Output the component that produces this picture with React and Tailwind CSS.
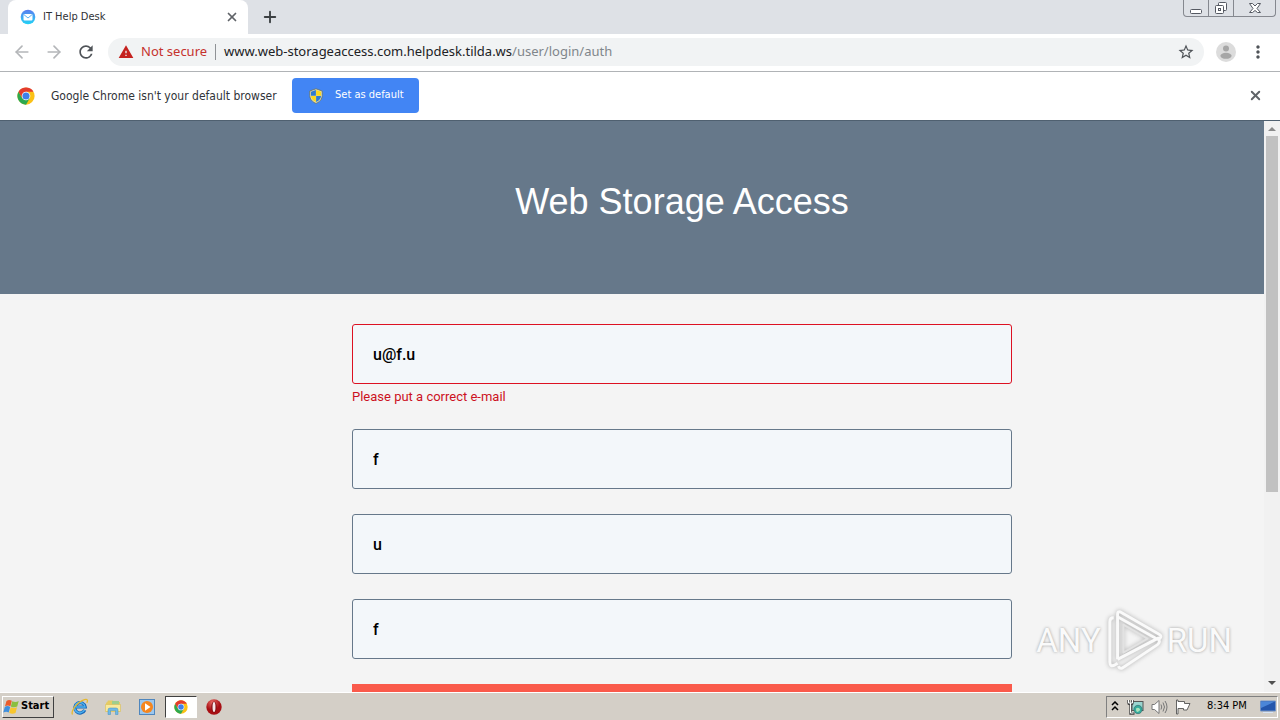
import React from 'react';
import { ArrowLeft, ArrowRight, Plus, X } from 'lucide-react';
import { MdRefresh, MdStarBorder, MdMoreVert, MdWarning } from 'react-icons/md';

const fields = [
    { id: 'email', label: 'E-mail', value: 'u@f.u', error: 'Please put a correct e-mail' },
    { id: 'username', label: 'Username', value: 'f' },
    { id: 'password', label: 'Password', value: 'u' },
    { id: 'confirm', label: 'Confirm password', value: 'f' },
];

const MailIcon = () => (
    <svg width="16" height="16" viewBox="0 0 16 16" aria-hidden="true">
        <defs>
            <linearGradient id="mail" x1="0" y1="0" x2="0" y2="1">
                <stop offset="0" stopColor="#5b7df0" />
                <stop offset="1" stopColor="#22d3f5" />
            </linearGradient>
        </defs>
        <circle cx="8" cy="8" r="7.3" fill="url(#mail)" />
        <rect x="3.5" y="5" width="9" height="6.4" rx="1" fill="#fff" />
        <path d="M3.8 5.5 8 9l4.2-3.5" fill="none" stroke="#4aa8f0" strokeWidth="0.9" />
    </svg>
);

const ChromeIcon = ({ size }) => (
    <svg width={size} height={size} viewBox="0 0 48 48" aria-hidden="true">
        <circle cx="24" cy="24" r="23" fill="#fbc116" />
        <path d="M4.1 12.5A23 23 0 0 0 24 47l10-17.3L24 24 14 29.7z" fill="#2da94f" />
        <path d="M4.1 12.5A23 23 0 0 1 43.9 12.5H24V24L14 29.7z" fill="#e33b2e" />
        <circle cx="24" cy="24" r="11.5" fill="#fff" />
        <circle cx="24" cy="24" r="9.5" fill="#3f7fea" />
    </svg>
);

const ShieldIcon = () => (
    <svg width="16" height="16" viewBox="0 0 16 16" aria-hidden="true">
        <path d="M8 .8 14.2 3v4.5c0 3.7-2.5 6.3-6.2 7.9-3.7-1.6-6.2-4.2-6.2-7.9V3z" fill="#e4dfbd" stroke="#63705f" strokeWidth="0.8" />
        <path d="M7.9 2 3 3.7v4.1h4.9z" fill="#2f7bd0" />
        <path d="M8.1 2 13 3.7v4.1H8.1z" fill="#fbd81d" />
        <path d="M3 8h4.9v6C5 12.7 3.1 10.7 3 8z" fill="#fbd81d" />
        <path d="M13 8H8.1v6c2.9-1.3 4.8-3.3 4.9-6z" fill="#2f7bd0" />
    </svg>
);

const AvatarIcon = () => (
    <svg width="20" height="20" viewBox="0 0 20 20" aria-hidden="true">
        <circle cx="10" cy="10" r="10" fill="#dcdcdc" />
        <circle cx="10" cy="6.5" r="3" fill="#a6a6a6" />
        <ellipse cx="10" cy="13.8" rx="5.6" ry="3" fill="#a6a6a6" />
    </svg>
);

const WindowsFlag = () => (
    <svg width="16" height="16" viewBox="0 0 16 16" aria-hidden="true">
        <path d="M3.5 2C5.5.5 7 .8 8.8 1.8L7.4 7.2C5.6 6.2 4 6.1 2 7.3z" fill="#ea5b2b" />
        <path d="M9.3 2.2c2 1 4.2 1 6.4-.1L14.2 7.5c-2.200 1.100-4.300 1-6.400-.1z" fill="#8bbf3f" />
        <path d="M1.800 7.900c2-1.200 3.700-1 5.400 0l-1.500 5.600c-1.800-1-3.400-1-5.400.1z" fill="#3f8fdd" />
        <path d="M7.700 8.200c2 1 4.100 1.100 6.300.1l-1.500 5.600c-2.100 1-4.200 1-6.300-.1z" fill="#f8c62d" />
    </svg>
);

const ExplorerIcon = () => (
    <svg width="18" height="18" viewBox="0 0 18 18" aria-hidden="true">
        <path d="M13.800 12A5.200 5.200 0 1 1 14.200 9H5" fill="none" stroke="#1767b8" strokeWidth="3.200" />
        <path d="M13.500 12A5.200 5.200 0 1 1 14 9H5" fill="none" stroke="#4db2f0" strokeWidth="1.500" />
        <path d="M1.500 16.500C-.5 13 7 3.500 13.500 1.600c3.400-1 3.400 1.300 2.300 3.300" fill="none" stroke="#e6b92e" strokeWidth="1.300" />
    </svg>
);

const FolderIcon = () => (
    <svg width="18" height="18" viewBox="0 0 18 18" aria-hidden="true">
        <path d="M2 4.500h1l1-2h5l1 1.500h6v10H2z" fill="#e5cb62" />
        <path d="M8 3h7v4H8z" fill="#9fce8c" />
        <path d="M1.500 6.500h15v7h-15z" fill="#f8e99c" stroke="#d7bc59" strokeWidth="0.600" />
        <path d="M4 16.500v-4.500q0-2 2-2h6q2 0 2 2v4.500h-2.500v-4h-5v4z" fill="#6fb9e6" stroke="#438fc0" strokeWidth="0.500" />
    </svg>
);

const PlayerIcon = () => (
    <svg width="16" height="16" viewBox="0 0 16 16" aria-hidden="true">
        <rect x="0.500" y="0.500" width="15" height="15" fill="#9cc7ee" stroke="#4f86bd" />
        <circle cx="8" cy="8" r="6" fill="#f5861f" />
        <path d="m6 4.300 5.500 3.700L6 11.700z" fill="#fff" />
    </svg>
);

const RedDiscIcon = () => (
    <svg width="16" height="16" viewBox="0 0 16 16" aria-hidden="true">
        <defs>
            <radialGradient id="disc" cx="0.400" cy="0.200">
                <stop offset="0" stopColor="#e86a63" />
                <stop offset="1" stopColor="#a80f14" />
            </radialGradient>
        </defs>
        <circle cx="8" cy="8" r="7.700" fill="url(#disc)" />
        <ellipse cx="8" cy="8" rx="2.600" ry="5.600" fill="#7c0a0e" />
        <ellipse cx="8" cy="8" rx="1.500" ry="5" fill="#f7e6e6" />
    </svg>
);

const NetworkIcon = () => (
    <svg width="17" height="16" viewBox="0 0 17 16" aria-hidden="true">
        <rect x="5" y="2.500" width="11" height="9" fill="#9bd5d0" stroke="#555" />
        <path d="M1.500 1v3q0 1 1 1h2q1 0 1-1V1M3.500 5v9.500h4" fill="none" stroke="#444" strokeWidth="2.400" />
        <path d="M1.500 1v3h4V1M3.500 4v10h3" fill="none" stroke="#fff" />
        <circle cx="11" cy="10.500" r="4.200" fill="#35aa9b" stroke="#366" strokeWidth="0.600" />
        <path d="M9 9.500q2-1.500 3.500 0t-1 3-2.500-3" fill="#a7e3bd" />
    </svg>
);

const SpeakerIcon = () => (
    <svg width="17" height="16" viewBox="0 0 17 16" fill="none" stroke="#777" aria-hidden="true">
        <path d="M1 5.500h2.500L8 1.500v13l-4.500-4H1z" fill="#fff" />
        <path d="M10 5.500q1.500 2.500 0 5M12 3.500q3 4.500 0 9M14 2q4 6 0 12" />
    </svg>
);

const FlagIcon = () => (
    <svg width="16" height="16" viewBox="0 0 16 16" aria-hidden="true">
        <path d="M1.500 1v14h1.500V9.500h5.500v1.500h3.500l3-6.500H9.500V2.500H3V1z" fill="#fff" stroke="#555" strokeWidth="0.900" />
    </svg>
);

const MonitorIcon = () => (
    <svg width="16" height="14" viewBox="0 0 16 14" aria-hidden="true">
        <path d="M.5 1h15v10H.5z" fill="#2456ac" stroke="#7292c4" />
        <path d="M1 1.500h14L1 8z" fill="#4b86d8" />
        <path d="M3 12.500h10" stroke="#d8e4f4" />
    </svg>
);

const TabStrip = () => (
    <div className="flex h-[34px] shrink-0 items-start bg-[#dee1e6]">
        <div className="ml-2 flex h-[34px] w-[240px] items-center rounded-t-lg bg-white pr-[9px] pl-3">
            <MailIcon />
            <span className="ml-[7px] flex-1 text-[11px] text-[#2f3236]">IT Help Desk</span>
            <button aria-label="Close tab" className="text-[#5f6368]"><X size={14} strokeWidth={3} /></button>
        </div>
        <button aria-label="New tab" className="ml-3 flex h-[34px] w-5 items-center justify-center text-[#3c4043]">
            <Plus size={18} strokeWidth={2.5} />
        </button>
        <div className="mr-1 ml-auto flex h-[17px] rounded-b border border-t-0 border-[#85888f]">
            <button aria-label="Minimize" className="flex w-[25px] items-center justify-center border-r border-[#85888f]">
                <svg width="12" height="14"><rect x="0.500" y="8.500" width="11" height="4" rx="1" fill="#fff" stroke="#555962" /></svg>
            </button>
            <button aria-label="Restore" className="flex w-[25px] items-center justify-center border-r border-[#85888f]">
                <svg width="14" height="14" fill="#fff" stroke="#555962">
                    <rect x="4.500" y="1.500" width="8" height="8" rx="1" />
                    <rect x="1.500" y="4.500" width="8" height="8" rx="1" />
                    <rect x="4.500" y="7.500" width="2" height="2" />
                </svg>
            </button>
            <button aria-label="Close window" className="flex w-[41px] items-center justify-center">
                <svg width="12" height="14" viewBox="0 0 12 14">
                    <path d="M.5 2.500h3L6 5l2.500-2.500h3L8 7.500l3.500 4h-3L6 9.500l-2.500 2h-3L4 7.500z" fill="#fff" stroke="#555962" />
                </svg>
            </button>
        </div>
    </div>
);

const Toolbar = () => (
    <div className="flex h-[38px] shrink-0 items-center border-b border-[#b0b3b6] bg-white px-3 pb-px">
        <button aria-label="Back" className="text-[#b4b6b9]"><ArrowLeft size={20} /></button>
        <button aria-label="Forward" className="ml-3 text-[#b4b6b9]"><ArrowRight size={20} /></button>
        <button aria-label="Reload" className="ml-3 text-[#4f5358]"><MdRefresh size={20} /></button>
        <div className="ml-3 flex h-7 flex-1 items-center rounded-full bg-[#f1f3f4] pr-[9px] pl-[10px] font-['Noto_Sans',sans-serif] text-[13px] whitespace-nowrap">
            <MdWarning size={16} className="text-[#c5221f]" />
            <span className="ml-[7px] text-[#c5322d]">Not secure</span>
            <span className="mx-2 h-4 w-px bg-[#8f9296]" />
            <span className="flex-1 text-[#202124]">
                www.web-storageaccess.com.helpdesk.tilda.ws<span className="text-[#80868b]">/user/login/auth</span>
            </span>
            <button aria-label="Bookmark this page" className="text-[#4f5358]"><MdStarBorder size={18} /></button>
        </div>
        <button aria-label="Profile" className="ml-3"><AvatarIcon /></button>
        <button aria-label="Menu" className="ml-3 text-[#4f5358]"><MdMoreVert size={20} /></button>
    </div>
);

const InfoBar = () => (
    <div className="flex h-12 shrink-0 items-center bg-white pr-[17px] pb-px pl-[17px]">
        <ChromeIcon size={18} />
        <span className="ml-4 w-[229px] text-[12px] whitespace-nowrap text-[#303338]">Google Chrome isn't your default browser</span>
        <button className="ml-3 flex h-[35px] w-[127px] items-center rounded bg-[#4285f4] pl-4 text-[11px] text-white">
            <ShieldIcon />
            <span className="ml-[11px]">Set as default</span>
        </button>
        <button aria-label="Dismiss" className="ml-auto text-[#5f6368]"><X size={15} strokeWidth={3} /></button>
    </div>
);

const Field = ({ field }) => (
    <div className="mb-[25px]">
        <input
            id={field.id}
            type="text"
            aria-label={field.label}
            defaultValue={field.value}
            aria-invalid={Boolean(field.error)}
            className={`block h-[60px] w-full rounded-[3px] border bg-[#f3f7fa] px-5 font-['Roboto',sans-serif] text-[16px] font-medium text-black outline-none ${field.error ? 'border-[#dd1122]' : 'border-[#66788a]'}`}
        />
        {field.error && (
            <p className="h-5 pt-[3px] font-['Roboto',sans-serif] text-[13px] leading-5 text-[#cc1122]">{field.error}</p>
        )}
    </div>
);

const Scrollbar = () => (
    <div className="flex w-4 shrink-0 flex-col items-center bg-[#f1f1f1]" aria-hidden="true">
        <svg width="16" height="15"><path d="m4 10 4-4 4 4z" fill="#8a8a8a" /></svg>
        <div className="flex w-3 flex-1 flex-col">
            <div className="h-[66%] bg-[#c1c1c1]" />
        </div>
        <svg width="16" height="16"><path d="m4 5 4 4 4-4z" fill="#505050" /></svg>
    </div>
);

const Watermark = () => (
    <div className="absolute right-12 bottom-[18px] flex items-center gap-1 font-['Roboto',sans-serif] text-[33px] text-[#fafafa] [text-shadow:0_0_3px_#999]">
        <span>ANY</span>
        <svg width="58" height="66" viewBox="0 0 60 68" fill="none" stroke="#fafafa" strokeWidth="3" strokeLinejoin="round" className="drop-shadow-[0_0_2px_#aaa]" aria-hidden="true">
            <path d="M13 53V6q0-3 3-2l40 23q3 2 1 4t-5 0L13 9" />
            <path d="M13 53 55 31q3 4-1 7L18 62q-3 1-4-2" />
            <path d="M9 10q-4 0-4 4v42q0 5 5 3l3-2" />
            <path d="M19 17v29l25-14.500z" stroke="#e2e2e2" strokeWidth="2" />
        </svg>
        <span>RUN</span>
    </div>
);

const Page = () => (
    <div className="relative flex min-h-0 flex-1 overflow-hidden border-t border-[#4f6070] bg-[#f4f4f4]">
        <main className="min-w-0 flex-1 overflow-hidden">
            <header className="bg-[#66788a] pt-[57px] pb-[68px] pl-[100px] text-center">
                <h1 className="font-['Liberation_Sans',Arial,sans-serif] text-[36px] leading-[48px] text-white">Web Storage Access</h1>
            </header>
            <form className="flex justify-center pt-[30px] pl-[100px]">
                <div className="w-full max-w-[660px]">
                    {fields.map((field) => <Field key={field.id} field={field} />)}
                    <button type="button" aria-label="Submit" className="block h-[60px] w-full bg-[#fa5a4b]" />
                </div>
            </form>
        </main>
        <Scrollbar />
        <Watermark />
    </div>
);

const Taskbar = () => (
    <footer className="flex h-7 shrink-0 items-center border-t border-white bg-[#d4cfc7] pl-0.5">
        <button className="flex h-[22px] w-[52px] items-center gap-0.5 border border-t-white border-r-[#404040] border-b-[#404040] border-l-white text-[11px] font-bold text-black">
            <WindowsFlag />Start
        </button>
        <button aria-label="Internet Explorer" className="ml-[17px]"><ExplorerIcon /></button>
        <button aria-label="Explorer" className="ml-[15px]"><FolderIcon /></button>
        <button aria-label="Media Player" className="ml-[17px]"><PlayerIcon /></button>
        <button aria-label="Chrome" className="ml-[10px] flex h-[22px] w-8 items-center justify-center border border-t-[#404040] border-r-white border-b-white border-l-[#404040] bg-white">
            <ChromeIcon size={14} />
        </button>
        <button aria-label="Opera" className="ml-[9px]"><RedDiscIcon /></button>
        <div className="mr-0.5 ml-auto flex h-[22px] items-center border border-t-[#808080] border-r-white border-b-white border-l-[#808080] pr-px pl-1 text-[11px] text-black">
            <svg width="8" height="12" fill="none" stroke="#000" strokeWidth="1.500" aria-hidden="true"><path d="m1 4 3-3 3 3M1 9l3-3 3 3" /></svg>
            <span className="ml-2 flex items-center gap-[7px]">
                <NetworkIcon />
                <SpeakerIcon />
                <FlagIcon />
            </span>
            <time className="ml-4 w-[41px] whitespace-nowrap">8:34 PM</time>
            <span className="ml-3"><MonitorIcon /></span>
        </div>
    </footer>
);

const App = () => (
    <div className="flex h-screen flex-col overflow-hidden font-['DejaVu_Sans_Condensed','Noto_Sans',sans-serif]">
        <TabStrip />
        <Toolbar />
        <InfoBar />
        <Page />
        <Taskbar />
    </div>
);

export default App;
